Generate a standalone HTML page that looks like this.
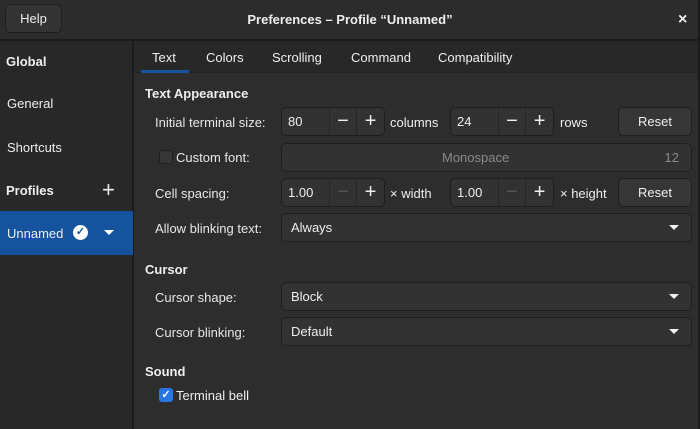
<!DOCTYPE html><html><head><style>
*{box-sizing:border-box;margin:0;padding:0}
body{width:700px;height:429px;background:#1b1b1b;font-family:"Liberation Sans",sans-serif;font-size:13px;color:#eeeeec;position:relative;overflow:hidden}
.a{position:absolute}
.hdr{left:0;top:0;width:698px;height:40px;background:#2c2c2c;border-bottom:1px solid #1b1b1b}
.side{left:0;top:41px;width:133px;height:388px;background:#282828;border-right:1px solid #1b1b1b}
.main{left:134px;top:41px;width:564px;height:388px;background:#2d2d2d}
.tabs{left:134px;top:41px;width:564px;height:32px;background:#282828;border-bottom:1px solid #222}
.btn{background:#363636;border:1px solid #1e1e1e;border-radius:5px;text-align:center}
.in{background:#323232;border:1px solid #1e1e1e;border-radius:5px}
.b{font-weight:bold}
.lbl{color:#e8e8e6}
.spin{height:29px;width:104px;display:flex}
.spin div{height:27px;line-height:27px}
.spin .v{width:47px;padding-left:6px}
.spin .m,.spin .p{width:28px;border-left:1px solid #262626;text-align:center;font-size:20px}
.dd{left:281px;width:411px;height:29px;line-height:27px;padding-left:9px}
.tri{position:absolute;right:12px;top:11px;width:0;height:0;border-left:5px solid transparent;border-right:5px solid transparent;border-top:5px solid #eee}
</style></head><body>
<div class="a hdr"></div>
<div class="a btn" style="left:5px;top:4px;width:57px;height:29px;line-height:27px;background:#333">Help</div>
<div class="a b" style="left:0;width:700px;top:12px;text-align:center">Preferences – Profile “Unnamed”</div>
<div class="a b" style="left:678px;top:11px;font-size:16px">×</div>
<div class="a side"></div>
<div class="a b" style="left:6px;top:54px">Global</div>
<div class="a" style="left:7px;top:96px">General</div>
<div class="a" style="left:7px;top:140px">Shortcuts</div>
<div class="a b" style="left:6px;top:183px">Profiles</div>
<div class="a" style="left:102px;top:177px;font-size:22px">+</div>
<div class="a" style="left:0;top:211px;width:133px;height:44px;background:#15539e"></div>
<div class="a" style="left:7px;top:226px">Unnamed</div>
<div class="a" style="left:73px;top:225px;width:15px;height:15px;border-radius:50%;background:#fff;color:#15539e;font-size:11px;line-height:15px;text-align:center;font-weight:bold">✓</div>
<div class="a" style="left:104px;top:230px;border-left:5px solid transparent;border-right:5px solid transparent;border-top:5px solid #fff"></div>
<div class="a main"></div>
<div class="a tabs"></div>
<div class="a" style="left:152px;top:50px">Text</div>
<div class="a" style="left:141px;top:70px;width:48px;height:3px;background:#15539e"></div>
<div class="a" style="left:206px;top:50px">Colors</div>
<div class="a" style="left:272px;top:50px">Scrolling</div>
<div class="a" style="left:351px;top:50px">Command</div>
<div class="a" style="left:438px;top:50px">Compatibility</div>
<div class="a b" style="left:145px;top:86px">Text Appearance</div>
<div class="a lbl" style="left:155px;top:115px">Initial terminal size:</div>
<div class="a in spin" style="left:281px;top:107px"><div class="v">80</div><div class="m">−</div><div class="p">+</div></div>
<div class="a" style="left:390px;top:115px">columns</div>
<div class="a in spin" style="left:450px;top:107px"><div class="v">24</div><div class="m">−</div><div class="p">+</div></div>
<div class="a" style="left:560px;top:115px">rows</div>
<div class="a btn" style="left:618px;top:107px;width:74px;height:29px;line-height:27px">Reset</div>
<div class="a" style="left:159px;top:150px;width:14px;height:14px;border:1px solid #1e1e1e;border-radius:3px;background:#363636"></div>
<div class="a lbl" style="left:176px;top:150px">Custom font:</div>
<div class="a in" style="left:281px;top:143px;width:411px;height:29px;line-height:27px;color:#8a8a8a"><span style="position:absolute;left:160px">Monospace</span><span style="position:absolute;right:12px">12</span></div>
<div class="a lbl" style="left:155px;top:186px">Cell spacing:</div>
<div class="a in spin" style="left:281px;top:178px"><div class="v">1.00</div><div class="m" style="color:#555">−</div><div class="p">+</div></div>
<div class="a" style="left:390px;top:186px">× width</div>
<div class="a in spin" style="left:450px;top:178px"><div class="v">1.00</div><div class="m" style="color:#555">−</div><div class="p">+</div></div>
<div class="a" style="left:560px;top:186px">× height</div>
<div class="a btn" style="left:618px;top:178px;width:74px;height:29px;line-height:27px">Reset</div>
<div class="a lbl" style="left:155px;top:221px">Allow blinking text:</div>
<div class="a in dd" style="top:213px">Always<span class="tri"></span></div>
<div class="a b" style="left:145px;top:262px">Cursor</div>
<div class="a lbl" style="left:155px;top:290px">Cursor shape:</div>
<div class="a in dd" style="top:282px">Block<span class="tri"></span></div>
<div class="a lbl" style="left:155px;top:325px">Cursor blinking:</div>
<div class="a in dd" style="top:317px">Default<span class="tri"></span></div>
<div class="a b" style="left:145px;top:364px">Sound</div>
<div class="a" style="left:159px;top:388px;width:14px;height:14px;border-radius:3px;background:#2a76e0;color:#fff;font-size:11px;line-height:14px;text-align:center;font-weight:bold">✓</div>
<div class="a" style="left:176px;top:388px">Terminal bell</div>
</body></html>
